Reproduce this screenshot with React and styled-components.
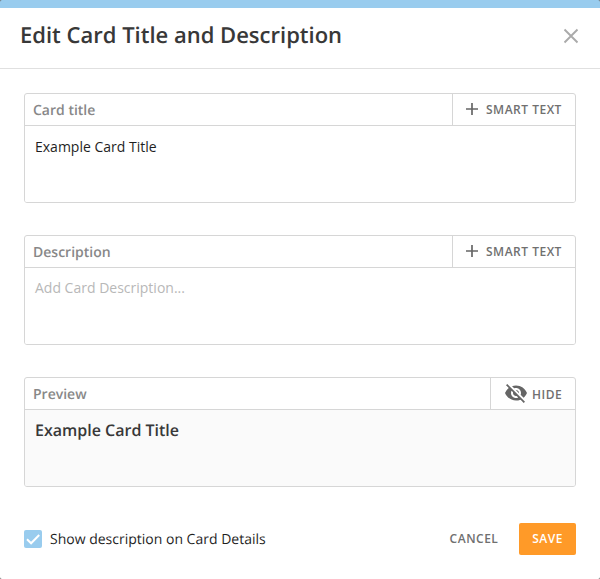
import React, { useState } from "react";
import styled, { createGlobalStyle } from "styled-components";
import { MdVisibilityOff } from "react-icons/md";

const GlobalStyle = createGlobalStyle`
  *, *::before, *::after { box-sizing: border-box; }
  body {
    margin: 0;
    background: #6b6b6b;
    font-family: "Open Sans", "Noto Sans", sans-serif;
    text-rendering: geometricPrecision;
  }
  button { font-family: inherit; cursor: pointer; }
`;

const Dialog = styled.section`
  display: flex;
  flex-direction: column;
  width: 600px;
  height: 579px;
  overflow: hidden;
  background: #fff;
  border-top: 8px solid #99ccee;
  border-radius: 2px;
`;

const Header = styled.header`
  display: flex;
  align-items: center;
  justify-content: space-between;
  height: 61px;
  padding: 0 21px 6px 20px;
  border-bottom: 1px solid #e0e0e0;
`;

const Heading = styled.h1`
  margin: 0;
  font-size: 22px;
  line-height: 30px;
  font-weight: 600;
  color: #383838;
`;

const CloseButton = styled.button`
  display: flex;
  padding: 2px 0 0;
  border: 0;
  background: none;
  color: #aaa;
`;

const Content = styled.div`
  display: flex;
  flex-direction: column;
  gap: 32px;
  padding: 24px 24px 0;
`;

const Panel = styled.div`
  display: flex;
  flex-direction: column;
  height: 110px;
  overflow: hidden;
  border: 1px solid #d6d6d6;
  border-radius: 3px;
`;

const PanelHead = styled.div`
  display: flex;
  justify-content: space-between;
  height: 32px;
  flex: none;
  border-bottom: 1px solid #d6d6d6;
`;

const PanelLabel = styled.span`
  padding: 7px 0 0 8px;
  font-size: 14px;
  line-height: 20px;
  font-weight: 600;
  color: #888;
`;

const PanelAction = styled.button`
  display: flex;
  align-items: center;
  width: ${(p) => p.$width};
  padding: 0 0 1px 13px;
  border: 0;
  border-left: 1px solid #d6d6d6;
  background: none;
  gap: ${(p) => p.$gap};
  font-size: 12px;
  line-height: 16px;
  font-weight: 600;
  letter-spacing: 0.5px;
  white-space: nowrap;
  color: #666;
`;

const ActionText = styled.span`
  padding-top: ${(p) => p.$drop};
  color: #707070;
`;

const TextField = styled.textarea`
  flex: 1;
  padding: ${(p) => (p.value ? "11px" : "10px")} 10px;
  border: 0;
  outline: none;
  resize: none;
  background: #fff;
  font: 400 14px/20px "Open Sans", "Noto Sans", sans-serif;
  color: #1f1f1f;
  &::placeholder { color: #b8b8b8; opacity: 1; }
`;

const PreviewBody = styled.div`
  flex: 1;
  padding: 9px 10px;
  background: #fafafa;
  font-size: 16px;
  line-height: 22px;
  font-weight: 600;
  color: #383838;
`;

const Footer = styled.footer`
  display: flex;
  align-items: center;
  height: 32px;
  margin: 36px 24px 0;
`;

const CheckLabel = styled.label`
  display: flex;
  align-items: center;
  gap: 8px;
  height: 32px;
  margin-right: auto;
  font-size: 14px;
  line-height: 20px;
  color: #1f1f1f;
  cursor: pointer;
`;

const CheckText = styled.span`
  padding-top: 2px;
`;

const HiddenInput = styled.input`
  appearance: none;
  width: 0;
  height: 0;
  margin: 0 -8px 0 0;
`;

const CheckBox = styled.span`
  display: flex;
  width: 18px;
  height: 18px;
  border-radius: 2px;
  background: ${(p) => (p.$on ? "#99ccee" : "#ddd")};
`;

const FooterButton = styled.button`
  height: 32px;
  width: ${(p) => (p.$primary ? "57px" : "76px")};
  margin-left: ${(p) => (p.$primary ? "7px" : "0")};
  padding: 0 0 2px;
  border: 0;
  border-radius: 2px;
  background: ${(p) => (p.$primary ? "#ff9a28" : "none")};
  color: ${(p) => (p.$primary ? "#fff" : "#707070")};
  font-size: 12px;
  font-weight: 600;
  letter-spacing: 0.5px;
`;

const PlusIcon = () => (
  <svg width="12" height="12" viewBox="0 0 12 12" fill="none" stroke="currentColor" strokeWidth="1.7">
    <path d="M6 0v12M0 6h12" />
  </svg>
);

function Field({ label, ...rest }) {
  return (
    <Panel>
      <PanelHead>
        <PanelLabel>{label}</PanelLabel>
        <PanelAction $width="123px" $gap="8px">
          <PlusIcon />
          <ActionText $drop="1px">SMART TEXT</ActionText>
        </PanelAction>
      </PanelHead>
      <TextField spellCheck={false} aria-label={label} {...rest} />
    </Panel>
  );
}

export default function App() {
  const [title, setTitle] = useState("Example Card Title");
  const [description, setDescription] = useState("");
  const [shown, setShown] = useState(true);
  return (
    <>
      <GlobalStyle />
      <Dialog>
        <Header>
          <Heading>Edit Card Title and Description</Heading>
          <CloseButton aria-label="Close">
            <svg width="16" height="16" viewBox="0 0 16 16" fill="none" stroke="currentColor" strokeWidth="1.9">
              <path d="M1.5 1.5l13 13M14.5 1.5l-13 13" />
            </svg>
          </CloseButton>
        </Header>
        <Content>
          <Field label="Card title" value={title} onChange={(e) => setTitle(e.target.value)} />
          <Field
            label="Description"
            placeholder="Add Card Description..."
            value={description}
            onChange={(e) => setDescription(e.target.value)}
          />
          <Panel>
            <PanelHead>
              <PanelLabel>Preview</PanelLabel>
              <PanelAction $width="85px" $gap="4px">
                <MdVisibilityOff size={24} />
                <ActionText $drop="3px">HIDE</ActionText>
              </PanelAction>
            </PanelHead>
            <PreviewBody>{title}</PreviewBody>
          </Panel>
        </Content>
        <Footer>
          <CheckLabel>
            <HiddenInput type="checkbox" checked={shown} onChange={() => setShown(!shown)} />
            <CheckBox $on={shown}>
              <svg width="18" height="18" viewBox="0 0 18 18" fill="none" stroke="#fff" strokeWidth="2">
                <path d="M3 9.2l4.1 4.1L15.2 5" />
              </svg>
            </CheckBox>
            <CheckText>Show description on Card Details</CheckText>
          </CheckLabel>
          <FooterButton>CANCEL</FooterButton>
          <FooterButton $primary>SAVE</FooterButton>
        </Footer>
      </Dialog>
    </>
  );
}
